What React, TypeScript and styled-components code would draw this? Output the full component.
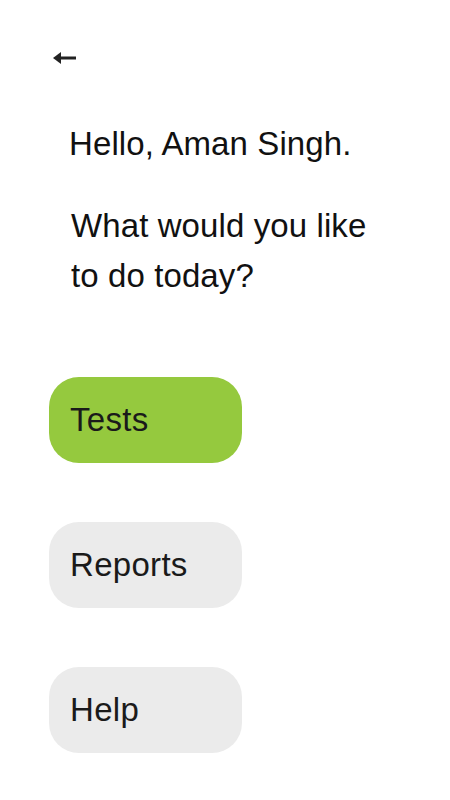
import React from "react";
import styled, { createGlobalStyle } from "styled-components";

const Global = createGlobalStyle`
  html, body { margin: 0; padding: 0; background: #ffffff; }
  body { font-family: "Liberation Sans", Arial, Helvetica, sans-serif; color: #111111; }
`;

const Page = styled.div`
  width: 450px;
  min-height: 800px;
  box-sizing: border-box;
  padding: 46px 0 0 49px;
  display: flex;
  flex-direction: column;
`;

const BackButton = styled.button`
  width: 24px;
  height: 24px;
  margin-left: 3px;
  padding: 0;
  border: none;
  background: none;
  display: flex;
  align-items: center;
  justify-content: center;
  cursor: pointer;
`;

const Greeting = styled.div`
  margin: 49px 0 0 20px;
  display: flex;
  flex-direction: column;
  gap: 32px;
`;

const Line = styled.p<{ $shift?: number }>`
  margin: 0 0 0 ${(p) => p.$shift ?? 0}px;
  font-size: 33px;
  line-height: 50px;
  letter-spacing: 0.1px;
  color: #111111;
`;

const Menu = styled.nav`
  margin-top: 76px;
  display: flex;
  flex-direction: column;
  gap: 59px;
`;

const MenuButton = styled.button<{ $active?: boolean }>`
  width: 193px;
  height: 86px;
  box-sizing: border-box;
  padding: 0 0 0 21px;
  border: none;
  border-radius: 30px;
  background: ${(p) => (p.$active ? "#95c93e" : "#ebebeb")};
  color: #1a1a1a;
  font-family: "Liberation Sans", Arial, Helvetica, sans-serif;
  font-size: 33px;
  letter-spacing: 0.3px;
  text-align: left;
  display: flex;
  align-items: center;
  cursor: pointer;
`;

const items = [
  { label: "Tests", active: true },
  { label: "Reports" },
  { label: "Help" },
];

export default function App() {
  return (
    <>
      <Global />
      <Page>
        <BackButton aria-label="Back">
          <svg width="24" height="24" viewBox="0 0 24 24">
            <path d="M1 12 L9 6 L9 18 Z" fill="#222" />
            <rect x="8" y="10.5" width="16" height="3" fill="#222" />
          </svg>
        </BackButton>
        <Greeting>
          <Line>Hello, Aman Singh.</Line>
          <Line $shift={2}>
            What would you like
            <br />
            to do today?
          </Line>
        </Greeting>
        <Menu>
          {items.map((it) => (
            <MenuButton key={it.label} $active={it.active}>
              {it.label}
            </MenuButton>
          ))}
        </Menu>
      </Page>
    </>
  );
}
